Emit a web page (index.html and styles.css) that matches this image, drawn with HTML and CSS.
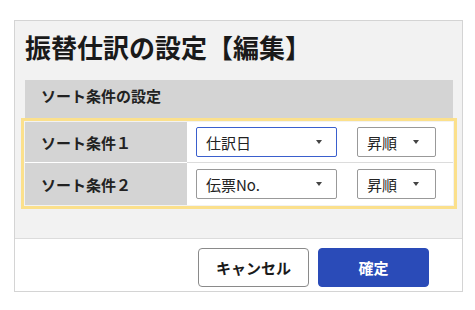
FILE: index.html
```html
<!DOCTYPE html>
<html lang="ja">
<head>
<meta charset="utf-8">
<link rel="stylesheet" href="styles.css">
</head>
<body>
<div class="dialog">
  <div class="dialog-body">
    <h1 class="title">振替仕訳の設定【編集】</h1>
    <div class="section-head">ソート条件の設定</div>
    <div class="sort-table">
      <div class="row">
        <div class="label">ソート条件１</div>
        <div class="value">
          <div class="select select-key focused"><span>仕訳日</span><i class="caret"></i></div>
          <div class="select select-order"><span>昇順</span><i class="caret"></i></div>
        </div>
      </div>
      <div class="row">
        <div class="label">ソート条件２</div>
        <div class="value">
          <div class="select select-key"><span>伝票No.</span><i class="caret"></i></div>
          <div class="select select-order"><span>昇順</span><i class="caret"></i></div>
        </div>
      </div>
    </div>
  </div>
  <div class="dialog-footer">
    <button class="btn btn-cancel">キャンセル</button>
    <button class="btn btn-ok">確定</button>
  </div>
</div>
</body>
</html>
```

FILE: styles.css
```css
* { box-sizing: border-box; }
html, body { margin: 0; padding: 0; background: #fff; }
body {
  font-family: "Noto Sans CJK JP", "Noto Sans", sans-serif;
  color: #222;
  padding: 20px 0 0 14px;
}
.dialog {
  width: 449px;
  height: 272px;
  border: 1px solid #d4d4d4;
  background: #f2f2f2;
  display: flex;
  flex-direction: column;
}
.dialog-body {
  flex: 1;
  padding: 13px 0 0 10px;
}
.title {
  margin: 0 0 20px 0;
  font-size: 26px;
  line-height: 26px;
  font-weight: 700;
  color: #1a1a1a;
}
.section-head {
  width: 428px;
  height: 38px;
  background: #d4d4d4;
  font-size: 15px;
  font-weight: 700;
  line-height: 32px;
  padding: 0 0 6px 16px;
  color: #222;
}
.sort-table {
  width: 428px;
  margin-top: 4px;
  outline: 3px solid #fbe08c;
  outline-offset: 1px;
  background: #fff;
}
.row {
  display: flex;
  height: 41px;
}
.row + .row { height: 42px; }
.label {
  width: 162px;
  background: #d4d4d4;
  border-bottom: 1px solid #fff;
  font-size: 15px;
  font-weight: 700;
  display: flex;
  align-items: center;
  padding-left: 16px;
}
.value {
  flex: 1;
  border-bottom: 1px solid #dcdcdc;
  display: flex;
  align-items: center;
  gap: 20px;
  padding-left: 9px;
}
.row + .row .label, .row + .row .value { border-bottom: none; }
.select {
  height: 30px;
  border: 1px solid #999;
  border-radius: 2px;
  background: #fff;
  display: flex;
  align-items: center;
  justify-content: space-between;
  font-size: 15px;
  padding: 0 14px 0 9px;
  color: #222;
}
.select-key { width: 141px; }
.select-order { width: 79px; padding-right: 16px; }
.select.focused { border-color: #3a5fcd; }
.caret {
  width: 0;
  height: 0;
  border-left: 3.5px solid transparent;
  border-right: 3.5px solid transparent;
  border-top: 4px solid #444;
}
.dialog-footer {
  height: 53px;
  background: #fff;
  border-top: 1px solid #dcdcdc;
  display: flex;
  justify-content: flex-end;
  align-items: flex-start;
  gap: 9px;
  padding: 9px 33px 0 0;
}
.btn {
  width: 111px;
  height: 39px;
  border-radius: 4px;
  font-family: "Noto Sans CJK JP", "Noto Sans", sans-serif;
  font-size: 15px;
  font-weight: 700;
  padding: 0;
}
.btn-cancel {
  background: #fff;
  border: 1px solid #8a8a8a;
  color: #1a1a1a;
}
.btn-ok {
  background: #2a4bb8;
  border: 1px solid #2a4bb8;
  color: #fff;
}
```
